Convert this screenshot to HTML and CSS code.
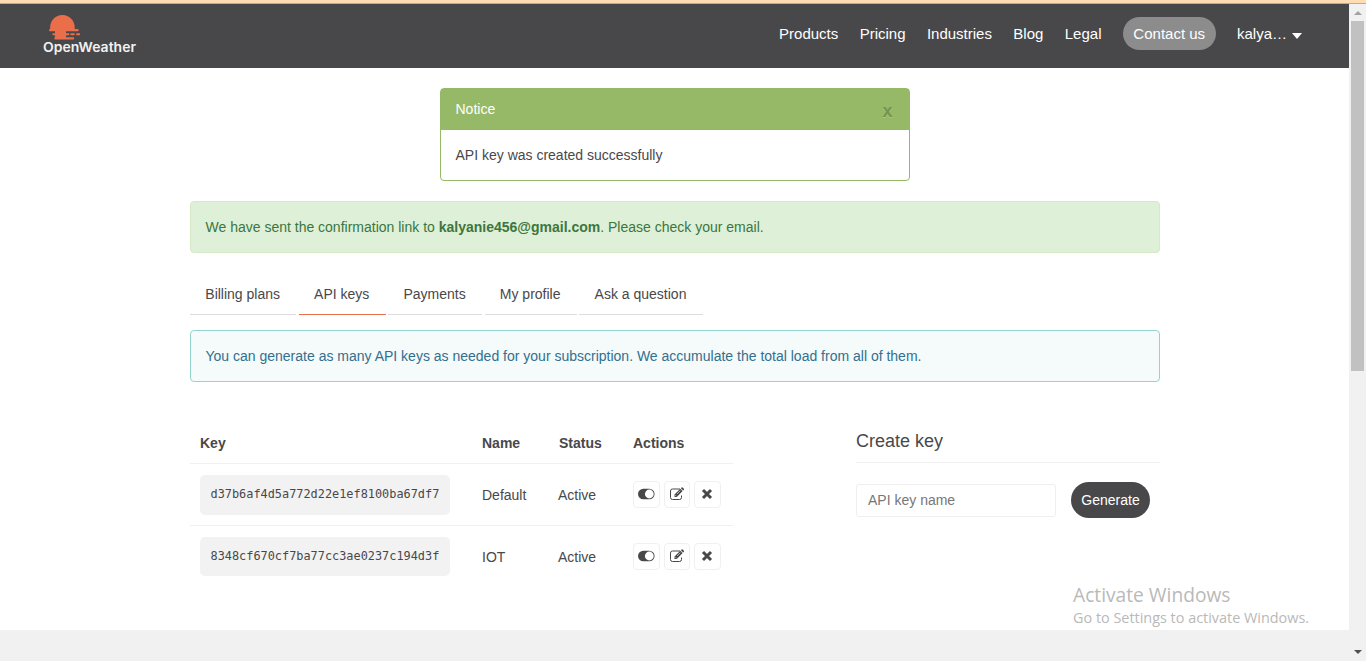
FILE: index.html
```html
<!DOCTYPE html>
<html lang="en">
<head>
<meta charset="utf-8">
<title>Members</title>
<link rel="stylesheet" href="styles.css">
</head>
<body>
<svg class="defs" aria-hidden="true">
  <symbol id="toggle" viewBox="0 0 18 12"><rect x="1" y=".7" width="16.600" height="10.600" rx="5.300" fill="#48484a"/><circle cx="12.300" cy="6" r="4.400" fill="#fff"/></symbol>
  <symbol id="edit" viewBox="0 0 16 14"><path d="M11 2H3.500A2 2 0 0 0 1.500 4v6.500a2 2 0 0 0 2 2h7a2 2 0 0 0 2-2V8.500" fill="none" stroke="#48484a" stroke-width="1"/><path d="M5.500 9.900V7.600L11.300 1.800l2.300 2.300-5.800 5.800zM11.900 1.200l.7-.7q.5-.4 1 0l1.300 1.300q.4.500 0 1l-.7.700z" fill="#48484a"/><path d="M6.300 8.100l1.200 1.200M8 7l3.300-3.300" stroke="#fff" stroke-width=".6"/></symbol>
  <symbol id="close" viewBox="0 0 12 12"><path d="M2 2l8 8M10 2l-8 8" stroke="#48484a" stroke-width="3"/></symbol>
</svg>
<div class="strip"></div>
<div class="frame">
  <div class="page">
    <header class="header">
      <svg class="logo" viewBox="0 0 96 44" width="96" height="44">
        <g fill="#eb6e4b"><path d="M9.500 16.500a12.300 12.300 0 1 1 23.800 0z"/><rect x="8" y="15.100" width="29.700" height="2.200" rx="1.100"/><rect x="14" y="16" width="11" height="8.500"/><rect x="11.300" y="19.300" width="15.500" height="2" rx="1"/><rect x="25" y="19.300" width="3.500" height="2" rx="1"/><rect x="29.300" y="19.300" width="4.500" height="2" rx="1"/><rect x="35" y="19.300" width="4.200" height="2" rx="1"/><rect x="13.300" y="23.300" width="19.800" height="2.100" rx="1"/></g>
        <text class="logo-text" x="2" y="37.500" textLength="93" lengthAdjust="spacingAndGlyphs">OpenWeather</text>
      </svg>
      <nav class="nav">
        <a>Products</a><a>Pricing</a><a>Industries</a><a>Blog</a><a>Legal</a>
        <a class="contact">Contact us</a>
        <a class="user">kalya…<i class="caret"></i></a>
      </nav>
    </header>
    <main class="main">
      <section class="notice">
        <div class="notice-head"><span>Notice</span><b class="notice-close">x</b></div>
        <div class="notice-body">API key was created successfully</div>
      </section>
      <div class="alert success">We have sent the confirmation link to <b>kalyanie456@gmail.com</b>. Please check your email.</div>
      <ul class="tabs"><li>Billing plans</li><li class="active">API keys</li><li>Payments</li><li>My profile</li><li>Ask a question</li></ul>
      <div class="alert info">You can generate as many API keys as needed for your subscription. We accumulate the total load from all of them.</div>
      <div class="columns">
        <div class="keys">
          <div class="row head"><b>Key</b><b>Name</b><b class="status-head">Status</b><b>Actions</b></div>
          <div class="row">
            <code class="key">d37b6af4d5a772d22e1ef8100ba67df7</code><span>Default</span><span>Active</span>
            <div class="actions"><button><svg width="18" height="12"><use href="#toggle"/></svg></button><button><svg width="16" height="14"><use href="#edit"/></svg></button><button><svg width="12" height="12"><use href="#close"/></svg></button></div>
          </div>
          <div class="row last">
            <code class="key">8348cf670cf7ba77cc3ae0237c194d3f</code><span>IOT</span><span>Active</span>
            <div class="actions"><button><svg width="18" height="12"><use href="#toggle"/></svg></button><button><svg width="16" height="14"><use href="#edit"/></svg></button><button><svg width="12" height="12"><use href="#close"/></svg></button></div>
          </div>
        </div>
        <div class="create">
          <h4>Create key</h4>
          <div class="form"><input type="text" placeholder="API key name"><button class="generate">Generate</button></div>
        </div>
      </div>
      <div class="watermark"><div class="watermark-title">Activate Windows</div><div class="watermark-text">Go to Settings to activate Windows.</div></div>
    </main>
    <footer class="footer"></footer>
  </div>
  <div class="scrollbar"><i class="up"></i><div class="thumb"></div><i class="down"></i></div>
</div>
</body>
</html>
```
FILE: styles.css
```css
* { box-sizing: border-box; }
body { margin: 0; height: 661px; overflow: hidden; display: flex; flex-direction: column; background: #fff; color: #48484a; font: 14px/20px "Liberation Sans", Arial, sans-serif; }
.defs { position: absolute; width: 0; height: 0; }
.strip { height: 4px; flex: none; background: #ffdcb1; border-bottom: 1px solid #c4ab8c; }
.frame { flex: 1; display: flex; }
.page { width: 1349px; display: flex; flex-direction: column; }
.header { height: 64px; flex: none; background: #48484a; display: flex; align-items: flex-start; justify-content: space-between; padding: 10px 47px 0 41px; }
.logo-text { font: 600 13.500px Inter, sans-serif; fill: #f2f2f2; }
.nav { display: flex; align-items: center; gap: 21.400px; height: 40px; color: #fff; font-size: 15px; }
.contact { height: 33px; line-height: 33px; padding: 0 10.500px; margin-bottom: 1px; border-radius: 17px; background: #8c8c8c; }
.user { display: flex; align-items: center; }
.caret { margin: 4px 0 0 5px; border: 5px solid transparent; border-top: 6px solid #fff; border-bottom: 0; }
.main { position: relative; height: 562px; flex: none; padding: 20px 189px 0 190px; }
.notice { width: 470px; height: 93px; margin: 0 auto 20px 250px; border: 1px solid #95b966; border-radius: 4px; }
.notice-head { height: 41px; padding: 10px 16.500px 0 14.500px; background: #95b966; color: #fff; display: flex; justify-content: space-between; }
.notice-close { font-size: 18px; line-height: 24px; color: #77944f; text-shadow: 0 1px 0 #aac785; }
.notice-body { padding: 15px 14.500px; }
.alert { height: 52px; border: 1px solid; border-radius: 4px; padding: 15px 14.500px; }
.success { color: #3c763d; background: #dff0d8; border-color: #d6e9c6; }
.info { color: #31708f; background: #f5fafb; border-color: #93d5cd; }
.tabs { list-style: none; display: flex; gap: 2.500px; height: 41px; margin: 21px 0 15px; padding: 0; }
.tabs li { height: 41px; padding: 10px 16.300px 10px 15.300px; border-bottom: 1px solid #ddd; }
.tabs .active { border-color: #eb6e4b; }
.columns { display: flex; justify-content: space-between; margin-top: 41px; }
.keys { width: 543px; }
.row { display: grid; grid-template-columns: 282px 76px 75px 1fr; align-items: center; height: 62px; padding-left: 10px; border-bottom: 1px solid #f0f0f0; }
.head { height: 41px; }
.status-head { padding-left: 1px; }
.last { height: 61px; border: 0; }
.key { width: 250px; height: 40px; line-height: 39px; padding-left: 10.500px; border-radius: 5px; background: #f2f2f2; font-family: "DejaVu Sans Mono", monospace; font-size: 11.880px; }
.last .key { height: 39px; }
.actions { display: flex; gap: 4px; }
.actions button { width: 26.600px; height: 27px; padding: 0 0 1px; display: flex; align-items: center; justify-content: center; background: #fff; border: 1px solid #f0f0f0; border-radius: 4px; }
.create { width: 304px; }
.create h4 { margin: 0; height: 40px; padding-top: 8px; font-size: 18px; font-weight: normal; border-bottom: 1px solid #f0f0f0; }
.form { display: flex; align-items: center; gap: 15px; padding-top: 19px; }
.form input { width: 200px; height: 33px; padding: 0 11px; border: 1px solid #efefef; border-radius: 3px; font: 14px "Liberation Sans", Arial, sans-serif; }
.form input::placeholder { color: #777; }
.generate { width: 79px; height: 36px; padding: 0; border: 0; border-radius: 18px; background: #48484a; color: #fff; font: 14px "Liberation Sans", Arial, sans-serif; }
.watermark { position: absolute; left: 1073px; top: 515px; color: #b9b9b9; font-family: "Open Sans", sans-serif; white-space: nowrap; }
.watermark-title { font-size: 19.200px; line-height: 24px; }
.watermark-text { font-size: 14.420px; line-height: 22px; }
.footer { flex: 1; background: #f1f1f1; }
.scrollbar { width: 17px; background: #f1f1f1; display: flex; flex-direction: column; align-items: center; }
.up { margin: 7px 0 6px; border: 4px solid transparent; border-top: 0; border-bottom-color: #a3a3a3; }
.thumb { width: 13px; height: 350px; background: #c1c1c1; }
.down { margin: auto 0 7px; border: 4px solid transparent; border-bottom: 0; border-top-color: #505050; }
```
